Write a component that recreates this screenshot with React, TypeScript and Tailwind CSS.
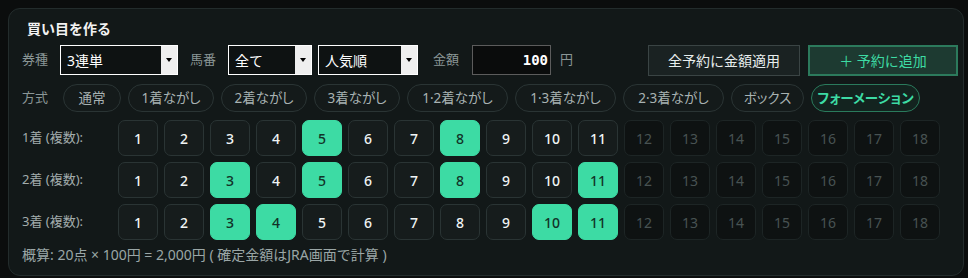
import { useState } from "react";

const font = "font-['Noto_Sans','Noto_Sans_CJK_JP',sans-serif]";

const modes = [
  { label: "通常", w: "w-[58px]" },
  { label: "1着ながし", w: "w-[86px]" },
  { label: "2着ながし", w: "w-[86px]" },
  { label: "3着ながし", w: "w-[86px]" },
  { label: "1·2着ながし", w: "w-[101px]" },
  { label: "1·3着ながし", w: "w-[101px]" },
  { label: "2·3着ながし", w: "w-[101px]" },
  { label: "ボックス", w: "w-[73px]" },
  { label: "フォーメーション", w: "w-[109px]" },
];

const initial: number[][] = [
  [5, 8],
  [3, 5, 8, 11],
  [3, 4, 10, 11],
];

const Select = ({ value, width }: { value: string; width: string }) => (
  <div className={`flex h-[30px] ${width} border border-white bg-[#0e1212]`}>
    <div className="flex-1 flex items-center pl-[6px] text-[14px] text-white">{value}</div>
    <div className="w-[16px] bg-[#efefef] flex items-center justify-center">
      <div className="w-0 h-0 border-l-[3px] border-r-[3px] border-t-[4px] border-l-transparent border-r-transparent border-t-black" />
    </div>
  </div>
);

const App = () => {
  const [mode, setMode] = useState("フォーメーション");
  const [picks, setPicks] = useState(initial);

  const toggle = (row: number, n: number) => {
    setPicks((p) =>
      p.map((r, i) => (i !== row ? r : r.includes(n) ? r.filter((x) => x !== n) : [...r, n]))
    );
  };

  return (
    <div className={`bg-[#0b0d0d] w-[968px] h-[278px] pt-2 pl-2 ${font}`}>
      <div className="w-[956px] h-[268px] rounded-[12px] border border-[#232c2c] bg-[#121818] pl-[13px] pt-[9px]">
        <h2 className="pl-[5px] text-[14px] font-bold text-[#f2f2f2] leading-[22px]">買い目を作る</h2>

        <div className="flex items-center mt-[4px] h-[32px] text-[13px] text-[#8a9696]">
          <span>券種</span>
          <div className="ml-[12px]">
            <Select value="3連単" width="w-[118px]" />
          </div>
          <span className="ml-[12px]">馬番</span>
          <div className="ml-[12px]">
            <Select value="全て" width="w-[84px]" />
          </div>
          <div className="ml-[6px]">
            <Select value="人気順" width="w-[100px]" />
          </div>
          <span className="ml-[15px]">金額</span>
          <div className="ml-[13px] w-[79px] h-[30px] border border-[#5c5c5c] bg-[#0a0c0c] flex items-center justify-end pr-[2px] font-['DejaVu_Sans_Mono',monospace] font-bold text-[14px] text-white">
            100
          </div>
          <span className="ml-[9px]">円</span>
          <button className="ml-auto h-[31px] w-[152px] border border-[#3a4444] bg-[#1a2222] text-[14px] text-[#e8eeee]">
            全予約に金額適用
          </button>
          <button className="ml-[8px] mr-[5px] h-[31px] w-[150px] border-2 border-[#2c7a5c] bg-[#1d3a31] text-[14px] text-[#3ddba4]">
            ＋ 予約に追加
          </button>
        </div>

        <div className="flex items-center mt-[8px] h-[28px]">
          <span className="text-[13px] text-[#8a9696] w-[41px]">方式</span>
          <div className="flex gap-[7px] [font-feature-settings:'palt']">
            {modes.map((m) => (
              <button
                key={m.label}
                onClick={() => setMode(m.label)}
                className={
                  m.label === mode
                    ? `${m.w} h-[28px] rounded-full border border-[#2a7a5c] bg-[#13231f] text-[13.5px] font-semibold text-[#3ddba4]`
                    : `${m.w} h-[28px] rounded-full border border-[#2a3434] bg-[#141a1a] text-[13.5px] text-[#a8b2b2]`
                }
              >
                {m.label}
              </button>
            ))}
          </div>
        </div>

        <div className="flex flex-col gap-[6px] mt-[8px]">
          {["1着", "2着", "3着"].map((label, row) => (
            <div key={label} className="flex items-center">
              <span className="w-[96px] text-[13px] text-[#a2acac]">{label} (複数):</span>
              <div className="flex gap-[6px]">
                {Array.from({ length: 18 }, (_, i) => i + 1).map((n) => {
                  const disabled = n > 11;
                  const on = picks[row].includes(n);
                  return (
                    <button
                      key={n}
                      disabled={disabled}
                      onClick={() => toggle(row, n)}
                      className={
                        disabled
                          ? "w-[40px] h-[36px] rounded-[7px] border border-[#1d2525] bg-[#0e1212] text-[14px] text-[#485252]"
                          : on
                          ? "w-[40px] h-[36px] rounded-[7px] border border-[#3ddba4] bg-[#3ddba4] text-[14px] font-medium text-[#123328]"
                          : "w-[40px] h-[36px] rounded-[7px] border border-[#2a3434] bg-[#161c1c] text-[14px] font-medium text-[#f0f4f4]"
                      }
                    >
                      {n}
                    </button>
                  );
                })}
              </div>
            </div>
          ))}
        </div>

        <p className="mt-[4px] text-[14px] text-[#9aa6a6]">
          概算: 20点 × 100円 = 2,000円 ( 確定金額はJRA画面で計算 )
        </p>
      </div>
    </div>
  );
};

export default App;
